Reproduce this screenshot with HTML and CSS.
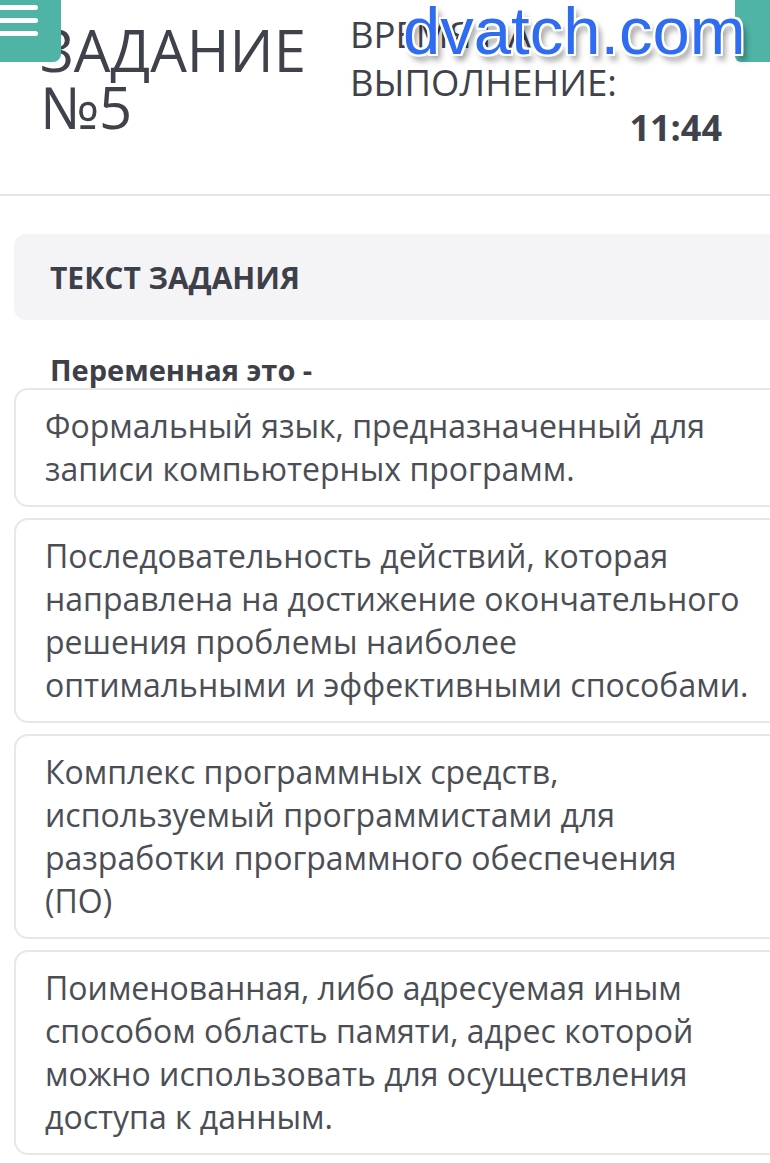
FILE: index.html
```html
<!DOCTYPE html>
<html lang="ru">
<head>
<meta charset="utf-8">
<link rel="stylesheet" href="styles.css">
</head>
<body>
<div class="page">
  <header class="head">
    <div class="title">ЗАДАНИЕ<br>№5</div>
    <div class="timer">
      <div class="timer-label">ВРЕМЯ НА<br>ВЫПОЛНЕНИЕ:</div>
      <div class="timer-value">11:44</div>
    </div>
  </header>
  <div class="menu-btn"><span></span><span></span><span></span></div>
  <div class="side-btn"></div>
  <div class="watermark">dvatch.com</div>
  <div class="divider"></div>
  <main class="content">
    <div class="section-box">ТЕКСТ ЗАДАНИЯ</div>
    <div class="question">Переменная это -</div>
    <div class="answers">
      <div class="answer">Формальный язык, предназначенный для записи компьютерных программ.</div>
      <div class="answer">Последовательность действий, которая направлена на достижение окончательного решения проблемы наиболее оптимальными и эффективными способами.</div>
      <div class="answer">Комплекс программных средств, используемый программистами для разработки программного обеспечения (ПО)</div>
      <div class="answer">Поименованная, либо адресуемая иным способом область памяти, адрес которой можно использовать для осуществления доступа к данным.</div>
    </div>
  </main>
</div>
</body>
</html>
```
FILE: styles.css
```css
html, body {
  margin: 0;
  padding: 0;
  background: #ffffff;
  overflow: hidden;
}
body {
  font-family: "Open Sans", "Noto Sans", sans-serif;
  color: #3f424a;
}
.page {
  position: relative;
  width: 770px;
  height: 1163px;
  overflow: hidden;
}
.head {
  display: flex;
  padding: 21px 0 0 40px;
  height: 180px;
  box-sizing: border-box;
}
.title {
  font-size: 58px;
  line-height: 57px;
  font-weight: 400;
  color: #3f424a;
  width: 310px;
}
.timer {
  display: flex;
  flex-direction: column;
  width: 372px;
}
.timer-label {
  font-size: 36.5px;
  line-height: 48px;
  color: #3f424a;
  margin-top: -11px;
}
.timer-value {
  align-self: flex-end;
  font-size: 36px;
  font-weight: 700;
  line-height: 44px;
  margin-top: 0;
}
.menu-btn {
  position: absolute;
  left: 0;
  top: 0;
  width: 61px;
  height: 62px;
  background: #4fb3a6;
  border-bottom-right-radius: 8px;
  display: flex;
  flex-direction: column;
  gap: 8px;
  padding-top: 5px;
  box-sizing: border-box;
}
.menu-btn span {
  display: block;
  width: 38px;
  height: 5px;
  background: #ffffff;
  border-radius: 0 3px 3px 0;
}
.side-btn {
  position: absolute;
  right: 0;
  top: 0;
  width: 35px;
  height: 62px;
  background: #4fb3a6;
  border-bottom-left-radius: 6px;
}
.watermark {
  position: absolute;
  left: 403px;
  top: -8px;
  font-family: "Liberation Sans", Arial, sans-serif;
  font-size: 67px;
  color: #2f6cf2;
  text-shadow: -2px -2px 0 #fff, 2px -2px 0 #fff, -2px 2px 0 #fff, 2px 2px 0 #fff, 0 2px 0 #fff, 0 -2px 0 #fff, 2px 0 0 #fff, -2px 0 0 #fff, 4px 6px 6px rgba(0,0,0,0.45);
}
.divider {
  height: 2px;
  background: #e6e6e8;
  margin-top: 14px;
}
.content {
  padding: 38px 0 0 14px;
}
.section-box {
  background: #f4f4f7;
  border-radius: 12px;
  height: 86px;
  margin-right: -20px;
  padding-left: 36px;
  display: flex;
  align-items: center;
  font-size: 30px;
  font-weight: 700;
  font-stretch: 96%;
  color: #3d4048;
}
.question {
  padding: 32px 0 0 36px;
  font-size: 29px;
  font-weight: 700;
  line-height: 36px;
  color: #3d4048;
}
.answers {
  display: flex;
  flex-direction: column;
  gap: 11px;
  margin-top: 0;
  margin-right: -20px;
}
.answer {
  border: 2px solid #e7e7e7;
  border-radius: 14px;
  padding: 14px 37px 15px 29px;
  font-size: 32px;
  line-height: 43px;
  color: #4b4e55;
}
```
